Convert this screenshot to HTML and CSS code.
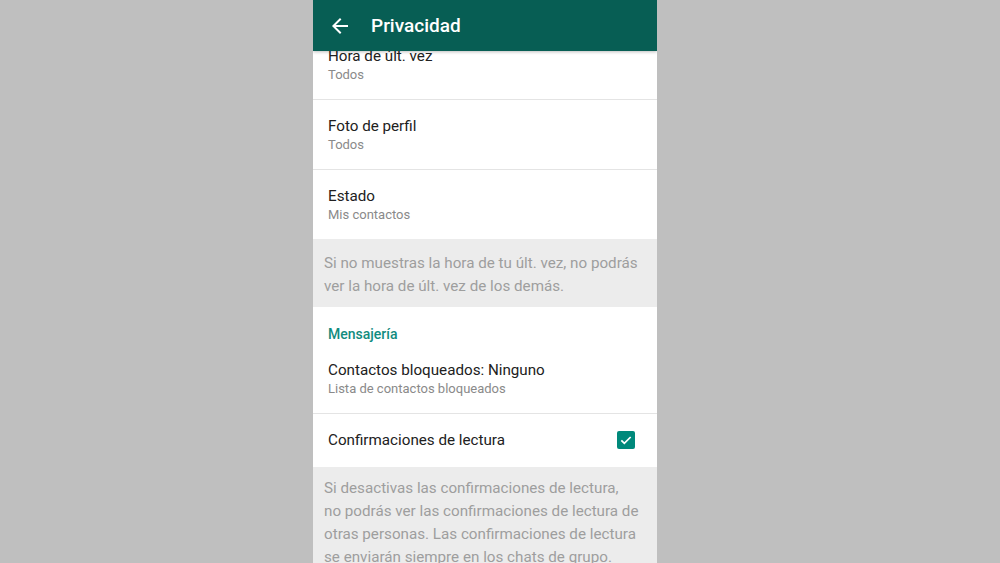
FILE: index.html
```html
<!DOCTYPE html>
<html>
<head>
<title>Privacidad</title>
<link rel="stylesheet" href="styles.css">
</head>
<body>

<div class="screen">

<div class="appBar">
<svg class="backIcon" viewBox="0 0 24 24" width="24" height="24">
<path d="M20 11H7.83l5.59-5.59L12 4l-8 8 8 8 1.41-1.41L7.83 13H20v-2z" fill="#fff"/>
</svg>
<span class="appTitle">Privacidad</span>
</div>

<div class="list">
<div class="row">
<div class="rowTitle">Hora de últ. vez</div>
<div class="rowSub">Todos</div>
</div>
<div class="row">
<div class="rowTitle">Foto de perfil</div>
<div class="rowSub">Todos</div>
</div>
<div class="row last">
<div class="rowTitle">Estado</div>
<div class="rowSub">Mis contactos</div>
</div>

<div class="note">
Si no muestras la hora de tu últ. vez, no podrás ver la hora de últ. vez de los demás.
</div>

<div class="section">Mensajería</div>
<div class="row blocked">
<div class="rowTitle">Contactos bloqueados: Ninguno</div>
<div class="rowSub">Lista de contactos bloqueados</div>
</div>
<div class="row check last">
<div class="rowTitle">Confirmaciones de lectura</div>
<span class="checkbox">
<svg viewBox="0 0 24 24" width="16" height="16">
<path d="M5 12.5l4.5 4.5L19 7.5" fill="none" stroke="#fff" stroke-width="2.6"/>
</svg>
</span>
</div>

<div class="note receipts">
Si desactivas las confirmaciones de lectura,<br>
no podrás ver las confirmaciones de lectura de otras personas. Las confirmaciones de lectura se enviarán siempre en los chats de grupo.
</div>
</div>

</div>

</body>
</html>
```

FILE: styles.css
```css
body {
    margin: 0;
    background-color: #bfbfbf;
    font-family: Roboto, "Noto Sans", sans-serif;
}
.screen {
    width: 344px;
    height: 563px;
    margin-left: 313px;
    background-color: #fff;
    overflow: hidden;
}
.appBar {
    position: relative;
    z-index: 1;
    height: 51px;
    background-color: #075e54;
    display: flex;
    align-items: center;
    box-shadow: 0 1px 3px rgba(0, 0, 0, 0.25);
}
.backIcon {
    margin-left: 15px;
    margin-right: 19px;
}
.appTitle {
    color: #fff;
    font-size: 19px;
    font-weight: 500;
}
.list {
    margin-top: -21px;
}
.row {
    height: 69px;
    padding: 0 15px;
    border-bottom: 1px solid #e4e4e4;
    display: flex;
    flex-direction: column;
    justify-content: center;
}
.row.last {
    border-bottom: none;
}
.rowTitle {
    font-size: 15.2px;
    color: #212121;
    line-height: 20px;
}
.rowSub {
    font-size: 13px;
    color: #8a8a8a;
    line-height: 18px;
}
.note {
    background-color: #ececec;
    color: #9e9e9e;
    font-size: 15.2px;
    line-height: 23.3px;
    padding: 13px 14px 8px 11px;
}
.note.receipts {
    padding-top: 10px;
}
.section {
    color: #128c7e;
    font-size: 14px;
    font-weight: 500;
    padding: 19px 15px 0;
}
.row.blocked {
    height: auto;
    padding-top: 18px;
    padding-bottom: 15px;
}
.row.check {
    height: 53px;
    flex-direction: row;
    align-items: center;
    justify-content: space-between;
    padding-right: 22px;
}
.checkbox {
    width: 18px;
    height: 18px;
    border-radius: 2px;
    background-color: #00897b;
    display: flex;
    align-items: center;
    justify-content: center;
}
```
